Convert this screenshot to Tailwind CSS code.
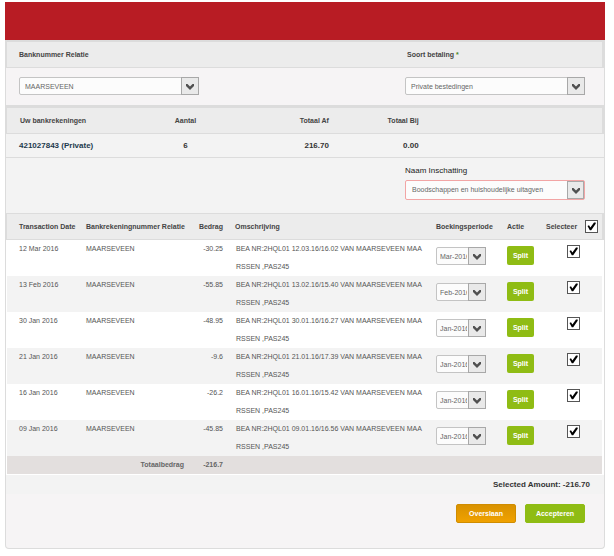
<!DOCTYPE html>
<html lang="nl">
<head>
<meta charset="utf-8">
<title>Bankbetalingen</title>
<script src="https://cdn.jsdelivr.net/npm/@tailwindcss/browser@4"></script>
</head>
<body class="bg-white pt-[2px] pb-2 pl-[5px] pr-[9px] font-['Liberation_Sans',Arial,sans-serif] text-[7px] leading-[18px] text-[#555]">
<svg class="hidden" aria-hidden="true">
  <symbol id="chevron" viewBox="0 0 8 6"><path d="M0 0h1.500L4 2.500 6.500 0H8v2L4 6 0 2z"/></symbol>
  <symbol id="check" viewBox="0 0 9 9"><path d="M0.500 4 2 3.200 3.400 5.400 7 0.500H8.700V1.700L4.200 8.200H2.800z"/></symbol>
</svg>

<header class="h-[38px] bg-[#b81c24]"></header>

<main class="rounded-b-sm border-x border-b border-[#dcdcdc] bg-[#f6f4f5]">
  <section class="border-b-[3px] border-[#dcdcdc]">
    <div class="grid grid-cols-[388fr_195fr] items-center border-t-2 border-b border-l border-r-2 border-[#dcdcdc] bg-[#ececec] pl-3 h-7 font-bold text-[#444]">
      <label for="bank">Banknummer Relatie</label>
      <label for="soort">Soort betaling <span class="text-[#4d8a1c]">*</span></label>
    </div>
    <div class="grid grid-cols-[386fr_199fr] pl-[13px] pt-[9px] pb-[10px]">
      <div class="relative w-[180px]">
        <select id="bank" class="block h-[18px] w-full appearance-none rounded-xs border border-[#c4c4c4] bg-[#fcfcfc] pr-5 pl-[5px] text-[#666]"><option>MAARSEVEEN</option></select>
        <span class="pointer-events-none absolute inset-y-0 right-0 flex w-[18px] items-center justify-center border border-[#a8a8a8] bg-[#e9e9e9] pt-[2px]"><svg class="h-[6px] w-2 fill-[#505050]"><use href="#chevron"/></svg></span>
      </div>
      <div class="relative w-[180px]">
        <select id="soort" class="block h-[18px] w-full appearance-none rounded-xs border border-[#c4c4c4] bg-[#fcfcfc] pr-5 pl-[5px] text-[#666]"><option>Private bestedingen</option></select>
        <span class="pointer-events-none absolute inset-y-0 right-0 flex w-[18px] items-center justify-center border border-[#a8a8a8] bg-[#e9e9e9] pt-[2px]"><svg class="h-[6px] w-2 fill-[#505050]"><use href="#chevron"/></svg></span>
      </div>
    </div>
  </section>

  <section class="bg-[#f3f3f3]">
    <table class="w-full table-fixed border-separate border-spacing-0">
      <colgroup><col class="w-[23%]"><col class="w-[14%]"><col class="w-[17%]"><col class="w-[15%]"><col></colgroup>
      <thead>
        <tr class="h-[26px] text-[#444] [&>th]:border-b [&>th]:border-[#dcdcdc] [&>th]:bg-[#ececec]">
          <th class="border-l pl-[13px] text-left">Uw bankrekeningen</th>
          <th>Aantal</th>
          <th class="text-right">Totaal Af</th>
          <th class="text-right">Totaal Bij</th>
          <th class="border-r-2"></th>
        </tr>
      </thead>
      <tbody>
        <tr class="h-6 text-[8px] font-bold text-[#333] [&>td]:border-b [&>td]:border-[#dcdcdc]">
          <td class="pl-[13px] text-[#1d3a4d]">421027843 (Private)</td>
          <td class="text-center">6</td>
          <td class="text-right">216.70</td>
          <td class="text-right">0.00</td>
          <td></td>
        </tr>
      </tbody>
    </table>
    <div class="grid grid-cols-[386fr_199fr] pl-[13px] pt-[4px] pb-[13px]">
      <div class="col-start-2">
        <label for="naam" class="block text-[8px] text-[#222]">Naam Inschatting</label>
        <div class="relative w-[180px]">
          <select id="naam" class="block h-5 w-full appearance-none rounded-xs border border-[#f2a5a5] bg-[#fcfcfc] pr-5 pl-[6px] text-[#666]"><option>Boodschappen en huishoudelijke uitagven</option></select>
          <span class="pointer-events-none absolute inset-y-px right-px flex w-[17px] items-center justify-center border border-[#a8a8a8] bg-[#e9e9e9] pt-[2px]"><svg class="h-[6px] w-2 fill-[#505050]"><use href="#chevron"/></svg></span>
        </div>
      </div>
    </div>
  </section>

  <table class="w-full table-fixed border-separate border-spacing-0 bg-white">
    <colgroup><col class="w-[74px]"><col class="w-[110px]"><col class="w-[39px]"><col><col class="w-[71px]"><col class="w-[39px]"><col class="w-[64px]"></colgroup>
    <thead>
      <tr class="h-[27px] text-left text-[#444] [&>th]:border-y [&>th]:border-[#dcdcdc] [&>th]:bg-[#ececec]">
        <th class="border-l pl-3">Transaction Date</th>
        <th class="pl-[6px]">Bankrekeningnummer Relatie</th>
        <th class="pr-[6px] text-right">Bedrag</th>
        <th class="pl-[6px]">Omschrijving</th>
        <th class="pl-[6px]">Boekingsperiode</th>
        <th class="pl-[6px]">Actie</th>
        <th class="border-r-2 pl-[6px]">
          <div class="flex items-center justify-between pr-1">
            <label for="all">Selecteer</label>
            <span class="relative block size-[13px]"><input id="all" type="checkbox" checked class="peer block size-[13px] appearance-none border border-[#555] bg-white"><svg class="pointer-events-none absolute inset-[2px] hidden size-[9px] fill-black peer-checked:block"><use href="#check"/></svg></span>
          </div>
        </th>
      </tr>
    </thead>
    <tbody id="rows"></tbody>
    <tfoot>
      <tr class="h-[18px] font-bold text-[#666] [&>td]:bg-[#e3dfde]">
        <td class="border-l border-white"></td>
        <td class="pr-[6px] text-right">Totaalbedrag</td>
        <td class="pr-[6px] text-right">-216.7</td>
        <td colspan="4" class="border-r-2 border-white"></td>
      </tr>
    </tfoot>
  </table>

  <div class="border-t border-white bg-[#f3f3f3] pt-px pr-[14px] text-right text-[8px] font-bold text-[#333]">Selected Amount: -216.70</div>

  <div class="flex justify-end gap-[9px] pt-[10px] pr-[19px] pb-[25px] text-[7px] font-bold text-white">
    <button type="button" class="h-[19px] w-[60px] rounded-xs border border-[#d08c00] bg-linear-to-b from-[#d99200] to-[#f0a100] leading-[17px]">Overslaan</button>
    <button type="button" class="h-[19px] w-[60px] rounded-xs border border-[#8fbc14] bg-[#8fbc14] leading-[17px]">Accepteren</button>
  </div>
</main>

<template id="row">
  <tr class="h-9 align-top [&>td]:border-white even:[&>td]:bg-[#f3f3f3]">
    <td class="border-l pl-3" data-f="date"></td>
    <td class="pl-[6px]">MAARSEVEEN</td>
    <td class="pr-[6px] text-right" data-f="amount"></td>
    <td class="pl-[7px] whitespace-nowrap"><span data-f="text"></span><br>RSSEN ,PAS245</td>
    <td class="pt-[7px] pl-[6px]">
      <div class="relative w-[50px]">
        <select aria-label="Boekingsperiode" class="block h-[18px] w-full appearance-none overflow-hidden rounded-xs border border-[#c4c4c4] bg-[#fcfcfc] pr-[18px] pl-[3px] text-[#666]"><option data-f="period"></option></select>
        <span class="pointer-events-none absolute inset-y-0 right-0 flex w-[18px] items-center justify-center border border-[#a8a8a8] bg-[#e9e9e9] pt-[2px]"><svg class="h-[6px] w-2 fill-[#505050]"><use href="#chevron"/></svg></span>
      </div>
    </td>
    <td class="pt-[6px] pl-[6px]"><button type="button" class="block h-[19px] w-[27px] rounded-xs bg-[#8fbc14] font-bold text-white">Split</button></td>
    <td class="border-r-2 pt-[5px] pl-[27px]"><span class="relative block size-[13px]"><input type="checkbox" checked aria-label="Selecteer" class="peer block size-[13px] appearance-none border border-[#555] bg-white"><svg class="pointer-events-none absolute inset-[2px] hidden size-[9px] fill-black peer-checked:block"><use href="#check"/></svg></span></td>
  </tr>
</template>
<script>
  const rows = [
    ["12 Mar 2016", "-30.25", "12.03.16/16.02", "Mar-2016"],
    ["13 Feb 2016", "-55.85", "13.02.16/15.40", "Feb-2016"],
    ["30 Jan 2016", "-48.95", "30.01.16/16.27", "Jan-2016"],
    ["21 Jan 2016", "-9.6", "21.01.16/17.39", "Jan-2016"],
    ["16 Jan 2016", "-26.2", "16.01.16/15.42", "Jan-2016"],
    ["09 Jan 2016", "-45.85", "09.01.16/16.56", "Jan-2016"]
  ];
  const template = document.getElementById("row");
  for (const [date, amount, stamp, period] of rows) {
    const row = template.content.cloneNode(true);
    const values = { date, amount, period, text: `BEA NR:2HQL01 ${stamp} VAN MAARSEVEEN MAA` };
    for (const [field, value] of Object.entries(values)) row.querySelector(`[data-f="${field}"]`).textContent = value;
    document.getElementById("rows").append(row);
  }
</script>
</body>
</html>
